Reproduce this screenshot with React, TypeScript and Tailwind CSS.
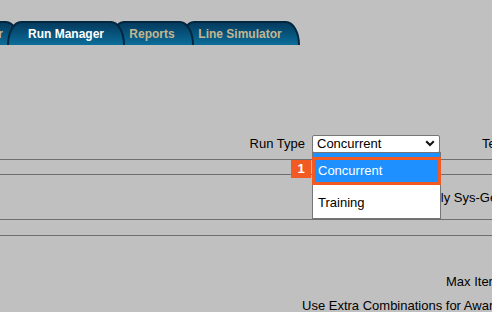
import React from "react";

const Chevron = () => (
    <svg width="10" height="7" viewBox="0 0 10 7" className="block">
        <polyline points="1.2,1.2 5,5 8.8,1.2" fill="none" stroke="#111" strokeWidth="2" />
    </svg>
);

const App = () => {
    return (
        <main className="relative w-[492px] h-[312px] overflow-hidden bg-[#c0c0c0] text-black font-['Liberation_Sans',Arial,sans-serif] text-[13px]">
            {/* tab strip */}
            <nav className="flex h-[45px] pt-[21px] whitespace-nowrap text-[12px] font-bold">
                <div className="relative z-[1] shrink-0 ml-[-80px] w-[100px] h-[24px] flex items-center justify-end pr-[15px] rounded-tl-[14px_24px] rounded-tr-[14px_24px] border-2 border-b-0 border-[#01263f] bg-linear-to-b from-[#053b5f] to-[#0b6e9a] text-[#c4b690]">
                    Scheduler
                </div>
                <div className="relative z-[4] shrink-0 ml-[-13px] w-[118px] h-[24px] flex items-center justify-center rounded-tl-[14px_24px] rounded-tr-[14px_24px] border-2 border-b-0 border-[#01263f] bg-linear-to-b from-[#053b5f] to-[#0b6e9a] text-white">
                    Run Manager
                </div>
                <div className="relative z-[3] shrink-0 ml-[-15px] w-[84px] h-[24px] flex items-center justify-center rounded-tl-[14px_24px] rounded-tr-[14px_24px] border-2 border-b-0 border-[#01263f] bg-linear-to-b from-[#053b5f] to-[#0b6e9a] text-[#c4b690]">
                    Reports
                </div>
                <div className="relative z-[2] shrink-0 ml-[-14px] w-[120px] h-[24px] flex items-center justify-center rounded-tl-[14px_24px] rounded-tr-[14px_24px] border-2 border-b-0 border-[#01263f] bg-linear-to-b from-[#053b5f] to-[#0b6e9a] text-[#c4b690]">
                    Line Simulator
                </div>
            </nav>

            <section className="flex flex-col whitespace-nowrap">
                <div className="h-[89px]" />

                <div className="flex items-center h-[19px]">
                    <span className="shrink-0 w-[305px] text-right">Run Type</span>
                    <div className="shrink-0 ml-[7px] w-[128px] h-[18px] flex items-center justify-between pl-[4px] pr-[4px] bg-white border border-[#767676] rounded-[2px]">
                        <span>Concurrent</span>
                        <Chevron />
                    </div>
                    <span className="shrink-0 ml-[42px]">Template</span>
                </div>

                <div className="h-[6px]" />
                <div className="h-px bg-[#6e6e6e]" />
                <div className="h-[14px]" />
                <div className="h-px bg-[#6e6e6e]" />

                <div className="h-[44px] flex items-center pl-[378px] pt-[2px]">
                    <span className="shrink-0">Include Only Sys-Gen Pairings</span>
                </div>

                <div className="h-px bg-[#6e6e6e]" />
                <div className="h-[15px]" />
                <div className="h-px bg-[#6e6e6e]" />

                <div className="h-[36px]" />
                <div className="h-[20px] flex items-center pl-[446px]">
                    <span className="shrink-0">Max Iterations</span>
                </div>
                <div className="h-[4px]" />
                <div className="h-[20px] flex items-center pl-[302px]">
                    <span className="shrink-0">Use Extra Combinations for Awards</span>
                </div>
            </section>

            {/* open dropdown list */}
            <div className="absolute left-[312px] top-[152px] w-[129px] h-[67px] bg-white border border-[#767676]">
                <div className="h-[31px] bg-[#1e90ff] flex items-center pl-[5px] pt-[4px] text-white">Concurrent</div>
                <div className="h-[34px] flex items-center pl-[5px] pt-[4px]">Training</div>
            </div>
            <div className="absolute left-[312px] top-[157px] w-[129px] h-[28px] border-[3px] border-[#f15a22]" />
            <div className="absolute left-[291px] top-[160px] w-[20px] h-[18px] bg-[#f15a22] flex items-center justify-center text-white font-bold text-[13px]">
                1
            </div>
        </main>
    );
};

export default App;
